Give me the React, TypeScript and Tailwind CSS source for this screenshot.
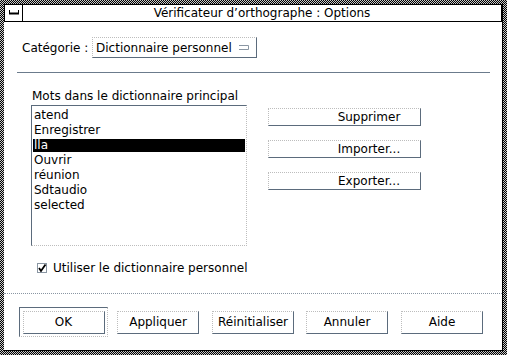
import React from "react";

const words = ["atend", "Enregistrer", "lla", "Ouvrir", "réunion", "Sdtaudio", "selected"];

const raised =
  "border [border-style:dotted_solid_solid_dotted] border-t-[#bdbdbd] border-l-[#bdbdbd] border-r-[#5b6b7c] border-b-[#5b6b7c] bg-white";
const inset =
  "border [border-style:solid_dotted_dotted_solid] border-t-[#5b6b7c] border-l-[#5b6b7c] border-r-[#bdbdbd] border-b-[#bdbdbd] bg-white";

function MenuGlyph() {
  return (
    <svg aria-hidden="true" width="10" height="5" viewBox="0 0 10 5">
      <path d="M0.5 0v3.5M9.5 0v3.5" stroke="#000" strokeWidth="1" />
      <path d="M0 3.5h10" stroke="#000" strokeWidth="2" />
    </svg>
  );
}

function OptionGlyph() {
  return (
    <svg aria-hidden="true" width="10" height="5" viewBox="0 0 10 5">
      <path d="M0 0.5h9.5v4H0" fill="none" stroke="#8a96a3" strokeWidth="1" />
    </svg>
  );
}

function CheckGlyph() {
  return (
    <svg aria-hidden="true" width="10" height="10" viewBox="0 0 10 10">
      <rect x="0.5" y="0.5" width="9" height="9" fill="#fff" stroke="#8a96a3" />
      <path d="M2 5l2 3L8.5 1.5" fill="none" stroke="#000" strokeWidth="1.8" />
    </svg>
  );
}

function SideButton({ label }: { label: string }) {
  return (
    <button type="button" className={`${raised} flex h-[18px] w-[153px] items-center justify-center pl-[49px] text-[12px] leading-none text-black`}>
      {label}
    </button>
  );
}

function FootButton({ label, className = "" }: { label: string; className?: string }) {
  return (
    <button type="button" className={`${raised} flex h-[23px] w-[82px] items-center justify-center text-[12px] leading-none text-black ${className}`}>
      {label}
    </button>
  );
}

export default function App() {
  return (
    <div className="h-[355px] w-[507px] bg-[repeating-conic-gradient(#000_0_25%,#c8c8c8_0_50%)] bg-size-[2px_2px] p-[4px] pt-[4px] font-['DejaVu_Sans',Verdana,sans-serif] text-black">
      <div className="flex h-full flex-col border-r border-b border-black bg-white">
        <div className="flex h-[18px] border border-black bg-white">
          <div className="flex w-[18px] items-center justify-center border-r border-black pb-[2px]">
            <MenuGlyph />
          </div>
          <div className="flex flex-1 items-center justify-center text-[12px] leading-none">Vérificateur d’orthographe : Options</div>
        </div>

        <div className="flex flex-1 flex-col">
          <div className="mt-[15px] flex h-[21px] items-center pl-[18px]">
            <span className="w-[70px] text-[12px]">Catégorie :</span>
            <div className={`${raised} flex h-[21px] w-[165px] items-center justify-between pl-[3px] pr-[7px] text-[12px]`}>
              <span>Dictionnaire personnel</span>
              <OptionGlyph />
            </div>
          </div>

          <div className="mx-[12px] mt-[14px] ml-[13px] h-px bg-[#6b7b8c]" />

          <div className="mt-[16px] flex pl-[27px]">
            <div className="flex flex-col">
              <span className="h-[14px] whitespace-nowrap pl-[1px] text-[12px] leading-[14px]">Mots dans le dictionnaire principal</span>
              <div className={`${inset} mt-[2px] h-[141px] w-[216px] px-[1px] pt-[2px]`}>
                {words.map((w) => (
                  <div key={w} className="flex h-[15px] items-center">
                    <div className={`h-[13px] w-full pl-[1px] text-[12px] leading-[13px] ${w === "lla" ? "bg-black text-white" : ""}`}>{w}</div>
                  </div>
                ))}
              </div>
            </div>
            <div className="ml-[21px] mt-[19px] flex flex-col gap-[14px]">
              <SideButton label="Supprimer" />
              <SideButton label="Importer..." />
              <SideButton label="Exporter..." />
            </div>
          </div>

          <div className="mt-[15px] flex h-[14px] items-center pl-[33px] text-[12px]">
            <CheckGlyph />
            <span className="ml-[6px]">Utiliser le dictionnaire personnel</span>
          </div>

          <div className="mt-[18px] border-t border-dotted border-[#8a96a3]" />

          <div className="mt-[13px] flex items-center pl-[15px]">
            <div className={`${inset} flex h-[30px] w-[89px] items-center justify-center`}>
              <FootButton label="OK" />
            </div>
            <FootButton label="Appliquer" className="ml-[9px]" />
            <FootButton label="Réinitialiser" className="ml-[13px]" />
            <FootButton label="Annuler" className="ml-[12px]" />
            <FootButton label="Aide" className="ml-[13px]" />
          </div>
        </div>
      </div>
    </div>
  );
}
